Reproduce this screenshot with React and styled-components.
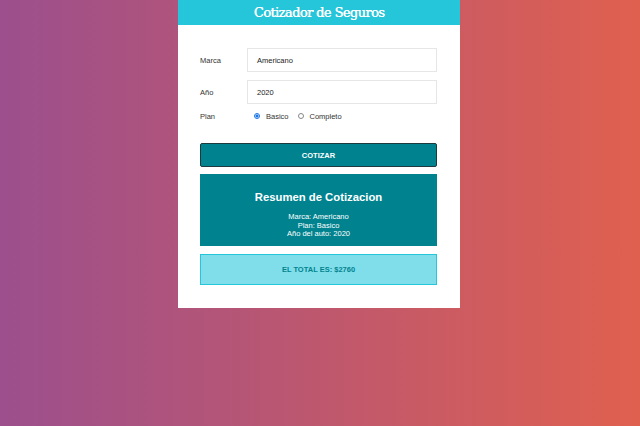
import React from 'react';
import styled, { createGlobalStyle } from 'styled-components';

const Global = createGlobalStyle`
  html, body { margin: 0; padding: 0; }
  body {
    font-family: "Liberation Sans", Arial, sans-serif;
    background-image: linear-gradient(to right, #9c4f8d 0%, #e0604f 100%);
    min-height: 100vh;
  }
`;

const Page = styled.div`
  display: flex;
  justify-content: center;
  min-height: 426px;
`;

const Card = styled.div`
  width: 282px;
  margin-left: -2px;
  align-self: flex-start;
  background: #fff;
`;

const Header = styled.header`
  height: 25px;
  background: #26c6da;
  display: flex;
  align-items: center;
  justify-content: center;
`;

const Title = styled.h1`
  margin: 0;
  color: #fff;
  font-family: "DejaVu Serif", "Liberation Serif", serif;
  font-weight: normal;
  font-size: 13px;
  letter-spacing: -0.6px;
  text-shadow: 0.3px 0 0 #fff;
`;

const Form = styled.form`
  padding: 23px 23px 23px 22px;
  display: flex;
  flex-direction: column;
`;

const Row = styled.div`
  display: flex;
  align-items: center;
  height: ${p => p.$h ?? 24}px;
  margin-bottom: ${p => p.$mb ?? 8}px;
`;

const Label = styled.label`
  flex: 0 0 47px;
  font-size: 7.5px;
  color: #333;
`;

const Input = styled.div`
  flex: 1;
  height: 24px;
  box-sizing: border-box;
  border: 1px solid #e6e6e6;
  padding-left: 9px;
  display: flex;
  align-items: center;
  font-size: 7.5px;
  color: #222;
`;

const Radio = styled.span`
  width: 6px;
  height: 6px;
  border-radius: 50%;
  box-sizing: border-box;
  border: 1px solid ${p => (p.$on ? '#1a73e8' : '#888')};
  background: ${p => (p.$on ? 'radial-gradient(circle, #1a73e8 50%, #fff 60%)' : '#fff')};
  margin: 0 6px 0 ${p => (p.$first ? 7 : 9)}px;
`;

const RadioText = styled.span`
  font-size: 7.5px;
  color: #333;
`;

const Button = styled.button`
  height: 24px;
  margin-top: 21px;
  background: #00838f;
  border: 1px solid #1d3a3f;
  border-radius: 2px;
  color: #fff;
  font-family: "Liberation Sans", Arial, sans-serif;
  font-weight: bold;
  font-size: 7.5px;
  text-transform: uppercase;
  padding: 0;
`;

const Summary = styled.div`
  margin-top: 7px;
  height: 72px;
  background: #00838f;
  color: #fff;
  text-align: center;
  box-sizing: border-box;
  padding-top: 17px;
`;

const SumTitle = styled.h2`
  margin: 0 0 10px;
  font-size: 11.3px;
  font-weight: bold;
`;

const SumLine = styled.p`
  margin: 0;
  font-size: 7.5px;
  line-height: 8.5px;
`;

const Total = styled.div`
  margin-top: 8px;
  height: 31px;
  box-sizing: border-box;
  background: #80deea;
  border: 1px solid #26c6da;
  color: #00838f;
  display: flex;
  align-items: center;
  justify-content: center;
  font-size: 7.5px;
  font-weight: bold;
  text-transform: uppercase;
`;

export default function App() {
  return (
    <Page>
      <Global />
      <Card>
        <Header>
          <Title>Cotizador de Seguros</Title>
        </Header>
        <Form>
          <Row>
            <Label>Marca</Label>
            <Input>Americano</Input>
          </Row>
          <Row $mb={6}>
            <Label>Año</Label>
            <Input>2020</Input>
          </Row>
          <Row $h={12} $mb={0}>
            <Label>Plan</Label>
            <Radio $on $first />
            <RadioText>Basico</RadioText>
            <Radio />
            <RadioText>Completo</RadioText>
          </Row>
          <Button type="button">Cotizar</Button>
          <Summary>
            <SumTitle>Resumen de Cotizacion</SumTitle>
            <SumLine>Marca: Americano</SumLine>
            <SumLine>Plan: Basico</SumLine>
            <SumLine>Año del auto: 2020</SumLine>
          </Summary>
          <Total>El total es: $2760</Total>
        </Form>
      </Card>
    </Page>
  );
}
